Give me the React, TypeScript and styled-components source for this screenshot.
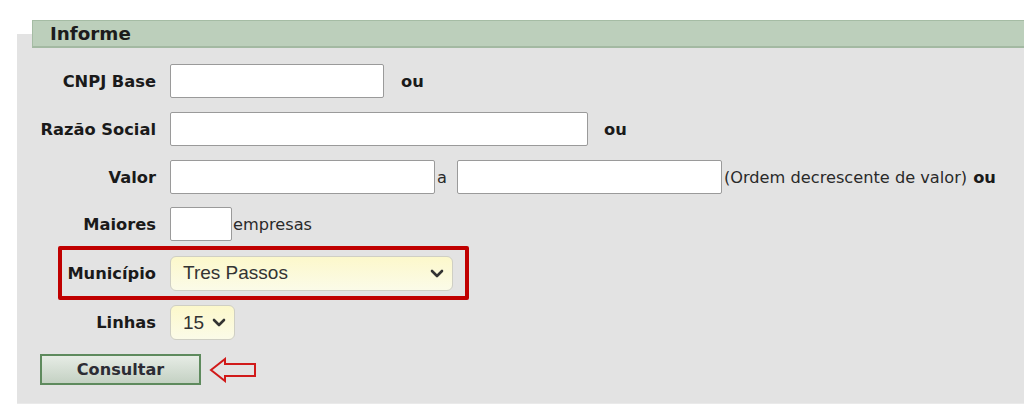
import React from "react";
import styled, { createGlobalStyle } from "styled-components";

const Global = createGlobalStyle`
  html, body { margin: 0; padding: 0; background: #ffffff; }
  body { font-family: "DejaVu Sans", Verdana, sans-serif; overflow: hidden; }
  * { box-sizing: border-box; }
`;

const Page = styled.div`
  width: 1024px;
  height: 415px;
  padding: 34px 0 0 17px;
  overflow: hidden;
`;

const Panel = styled.div`
  display: flow-root;
  background: #e3e3e3;
  height: 370px;
  margin-right: -20px;
  padding: 0 0 0 23px;
  border-bottom: 1px solid #eaeaea;
`;

const Header = styled.div`
  margin: -14px 0 0 -8px;
  height: 28px;
  background: #bccfbb;
  border-top: 1px solid #a5bca4;
  border-bottom: 2px solid #a3b9a2;
  border-left: 1px solid #a5bca4;
  padding-left: 17px;
  display: flex;
  align-items: center;
  font-weight: bold;
  font-size: 18.3px;
  color: #1c1c1c;
`;

const Form = styled.div`
  display: flex;
  flex-direction: column;
  padding-top: 16px;
`;

const Row = styled.div<{ $mt?: number }>`
  display: flex;
  align-items: center;
  margin-top: ${(p) => p.$mt ?? 0}px;
`;

const Label = styled.div<{ $w?: number }>`
  width: ${(p) => p.$w ?? 116}px;
  text-align: right;
  font-weight: bold;
  font-size: 16.3px;
  color: #1a1a1a;
  margin-right: 14px;
  white-space: nowrap;
`;

const TextInput = styled.div<{ $w: number }>`
  width: ${(p) => p.$w}px;
  height: 34px;
  background: #ffffff;
  border: 1px solid #9a9a9a;
  border-radius: 2px;
`;

const Bold = styled.span<{ $ml?: number }>`
  font-weight: bold;
  font-size: 16.3px;
  color: #1a1a1a;
  margin-left: ${(p) => p.$ml ?? 0}px;
`;

const Note = styled.span<{ $ml?: number; $mr?: number }>`
  font-size: 16.2px;
  color: #2a2a2a;
  margin-left: ${(p) => p.$ml ?? 0}px;
  margin-right: ${(p) => p.$mr ?? 0}px;
  white-space: nowrap;
`;

const Highlight = styled.div`
  display: flex;
  align-items: center;
  margin: 5px 0 0 18px;
  width: 411px;
  height: 54px;
  border: 4px solid #c00000;
  border-radius: 2px;
`;

const SelectBox = styled.div<{ $w: number }>`
  width: ${(p) => p.$w}px;
  height: 35px;
  display: flex;
  align-items: center;
  justify-content: space-between;
  padding: 0 8px 0 12px;
  background: linear-gradient(#fcf8cb, #fbfbe8);
  border: 1px solid #cfcfc4;
  border-radius: 6px;
  font-family: "Liberation Sans", Arial, sans-serif;
  font-size: 19px;
  color: #333333;
`;

const ButtonRow = styled.div`
  display: flex;
  align-items: center;
  margin-top: 14px;
`;

const Button = styled.div`
  width: 161px;
  height: 31px;
  border: 2px solid #5e8a5d;
  background: linear-gradient(#e6ece5, #c4d1c3);
  display: flex;
  align-items: center;
  justify-content: center;
  font-weight: bold;
  font-size: 16.1px;
  color: #2c2c34;
`;

const Chevron = () => (
  <svg width="14" height="9" viewBox="0 0 14 9">
    <path d="M2 2 L7 7 L12 2" fill="none" stroke="#333" strokeWidth="2.6" strokeLinecap="round" strokeLinejoin="round" />
  </svg>
);

const Arrow = () => (
  <svg width="50" height="26" viewBox="0 0 50 26" style={{ marginLeft: 8 }}>
    <path d="M2 13 L16 2 L16 7 L46 7 L46 19 L16 19 L16 24 Z" fill="none" stroke="#d11a1a" strokeWidth="2" strokeLinejoin="miter" />
  </svg>
);

export default function App() {
  return (
    <>
      <Global />
      <Page>
        <Panel>
          <Header>Informe</Header>
          <Form>
            <Row>
              <Label>CNPJ Base</Label>
              <TextInput $w={214} />
              <Bold $ml={17}>ou</Bold>
            </Row>
            <Row $mt={14}>
              <Label>Razão Social</Label>
              <TextInput $w={418} />
              <Bold $ml={16}>ou</Bold>
            </Row>
            <Row $mt={14}>
              <Label>Valor</Label>
              <TextInput $w={265} />
              <Note $ml={2} $mr={10}>a</Note>
              <TextInput $w={265} />
              <Note $ml={2}>(Ordem decrescente de valor)</Note>
              <Bold $ml={6}>ou</Bold>
            </Row>
            <Row $mt={13}>
              <Label>Maiores</Label>
              <TextInput $w={62} />
              <Note $ml={1}>empresas</Note>
            </Row>
            <Highlight>
              <Label $w={94}>Município</Label>
              <SelectBox $w={283}>
                <span>Tres Passos</span>
                <Chevron />
              </SelectBox>
            </Highlight>
            <Row $mt={5}>
              <Label>Linhas</Label>
              <SelectBox $w={65}>
                <span>15</span>
                <Chevron />
              </SelectBox>
            </Row>
            <ButtonRow>
              <Button>Consultar</Button>
              <Arrow />
            </ButtonRow>
          </Form>
        </Panel>
      </Page>
    </>
  );
}
